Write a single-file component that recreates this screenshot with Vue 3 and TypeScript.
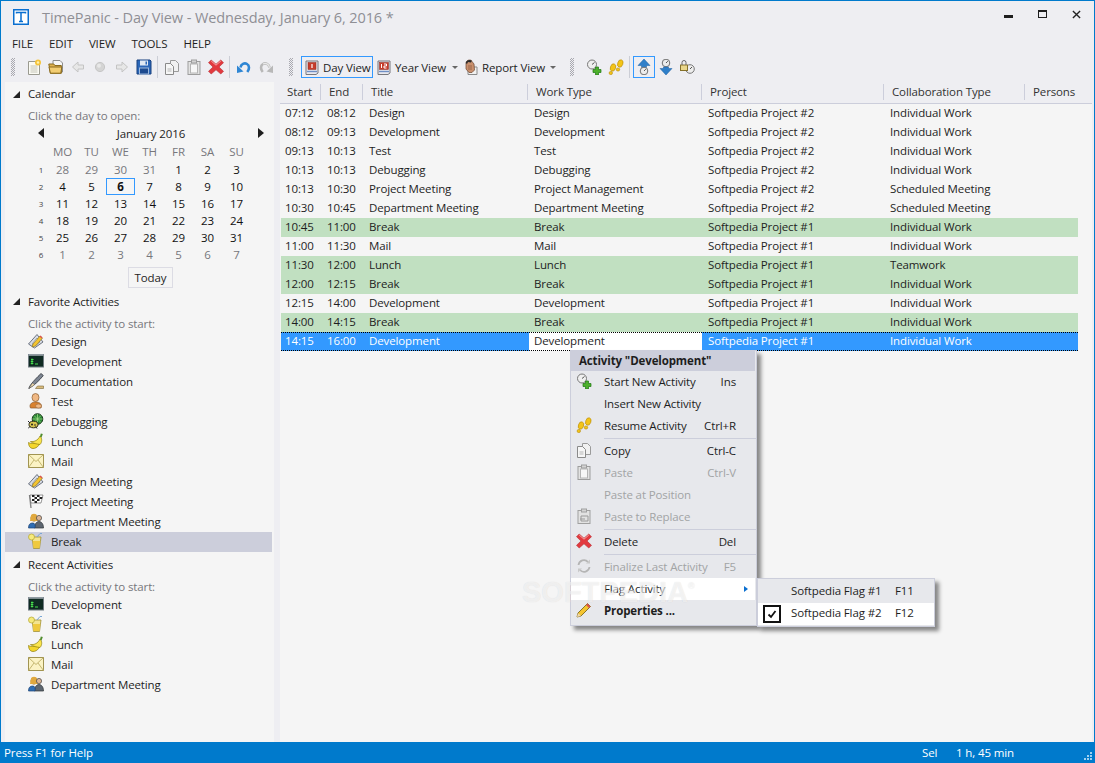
<script setup lang="ts">
const icons: Record<string, string> = {
  logo: '<rect x="0.75" y="0.75" width="14.500" height="14.500" fill="#fff" stroke="#0a6fd0" stroke-width="1.500"/><path d="M3.500 4.500V3.500h9v1M8 3.500v9M6 12.500h4" fill="none" stroke="#0a6fd0" stroke-width="1.500"/>',
  newdoc: '<path d="M2.500 2.500h8l3 3v10h-11z" fill="#fbfbf4" stroke="#9a9a90"/><path d="M4.500 7h7M4.500 9h7M4.500 11h7M4.500 13h7" stroke="#c4c4b8"/><circle cx="12" cy="3.500" r="3" fill="#f5c43a"/><circle cx="12" cy="3.500" r="1.200" fill="#fff3b0"/>',
  open: '<path d="M5 1.500h7l2.500 2.500v9H5z" fill="#f6f6f6" stroke="#8d8d8d"/><path d="M.8 5h5l1 1.500h6.500v7.800H2.400z" fill="#e0b24e" stroke="#8a6a1e"/><path d="M1 8h12.800l-1 6.200H2.400z" fill="#f2cd72" stroke="#8a6a1e"/>',
  back: '<path d="M8 3 2.500 8 8 13v-3h5.500V6H8z" fill="#e7e7e7" stroke="#c4c4c4"/>',
  dot: '<circle cx="8" cy="8" r="4.600" fill="#d4d4d4" stroke="#c6c6c6"/><circle cx="7" cy="6.800" r="2" fill="#e8e8e8"/>',
  fwd: '<path d="M8 3l5.500 5L8 13v-3H2.500V6H8z" fill="#e7e7e7" stroke="#c4c4c4"/>',
  save: '<path d="M1 1h13l1 1v13H1z" fill="#2a66b8" stroke="#18417f"/><rect x="4" y="1.500" width="8" height="5" fill="#dfe8f3"/><rect x="9.500" y="2.500" width="1.500" height="3" fill="#2a66b8"/><rect x="3.500" y="9" width="9" height="6" fill="#1c4a8f" stroke="#9cb8dc"/>',
  copy: '<path d="M6.500 1.500h5l3 3v8h-8z" fill="#f1f1f1" stroke="#9b9b9b"/><path d="M1.500 4.500h5l3 3v8h-8z" fill="#f6f6f6" stroke="#8a8a8a"/><path d="M3.500 10h4M3.500 12h4" stroke="#b6b6b6"/>',
  paste: '<rect x="2" y="2.500" width="12" height="13" fill="#e2e2e2" stroke="#9d9d9d"/><rect x="4.500" y="5" width="7" height="9" fill="#f7f7f7" stroke="#b5b5b5"/><rect x="5.500" y="1" width="5" height="3" fill="#d4d4d4" stroke="#9d9d9d"/>',
  del: '<path d="M3.200 1 8 5.200 12.800 1 15.500 3.700 11 8l4.500 4.300-2.700 2.700L8 10.800 3.200 15 .5 12.300 5 8 .5 3.700z" fill="#e2393f" stroke="#b72d33" stroke-width=".6"/><path d="M3.200 2 8 6.200 12.800 2" fill="none" stroke="#f7a3a3"/>',
  undo: '<path d="M4.500 8.500C5 5 8.500 3.500 11 5c2.500 1.500 2.700 5 .3 8" fill="none" stroke="#2f86d4" stroke-width="2.600"/><path d="M1 6.500l6.500 6-6.500 1.500z" fill="#2f86d4"/>',
  redo: '<path d="M11.500 8.500C11 5 7.500 3.500 5 5c-2.500 1.500-2.700 5-.3 8" fill="none" stroke="#b8b8b8" stroke-width="2.600"/><path d="M4.500 8.500C5 5 8.500 3.500 11 5" transform="matrix(-1 0 0 1 16 0)" fill="none" stroke="#e8e8e8" stroke-width="1.200"/><path d="M15 6.500l-6.500 6 6.500 1.500z" fill="#b8b8b8"/>',
  day: '<path d="M2 2h12v12l-2 1.500H2z" fill="#e9e9ee" stroke="#77777c"/><rect x="4" y="3.500" width="8" height="7" fill="#c63d2b" stroke="#8d2a1e" stroke-width=".5"/><path d="M8 5v4" stroke="#fff" stroke-width="1.200"/><path d="M3 12.500h10" stroke="#6f8fc5" stroke-width="1.400"/>',
  year: '<path d="M2 2h12v12l-2 1.500H2z" fill="#e9e9ee" stroke="#77777c"/><rect x="3.500" y="3.500" width="9" height="7" fill="#c63d2b" stroke="#8d2a1e" stroke-width=".5"/><path d="M5.500 5v4M8 5h2.500v2H8v2h2.500" stroke="#fff" fill="none"/><path d="M3 12.500h10" stroke="#6f8fc5" stroke-width="1.400"/>',
  report: '<path d="M5 8h9v7.500H5z" fill="#f2f2f2" stroke="#8a8a8a"/><path d="M3 4c0-2 2-3 3.500-3S9 1.500 9 2.500l2 2.500 .5 6-2.500 2.500H6L3 10z" fill="#c9906e" stroke="#6d4631" stroke-width=".7"/><path d="M2.800 4c.5-3 4-3.800 6-2.300L8 3.500 5 3 4 5z" fill="#2a2a2a"/><path d="M6 6v5M8 6v5" stroke="#87583e" stroke-width=".7"/>',
  start: '<circle cx="6" cy="5.500" r="4.500" fill="#efefef" stroke="#777"/><path d="M6 5.500 8.500 3.500" stroke="#555"/><path d="M9.500 8h3v2.500H15v3h-2.500V16h-3v-2.500H7v-3h2.500z" fill="#4db02c" stroke="#1c7612" stroke-width=".7"/>',
  resume: '<ellipse cx="5" cy="8.500" rx="2.600" ry="3.800" transform="rotate(18 5 8.500)" fill="#f3c418" stroke="#b98a00" stroke-width=".6"/><ellipse cx="2.800" cy="14" rx="1.700" ry="1.600" fill="#f3c418" stroke="#b98a00" stroke-width=".6"/><ellipse cx="12.300" cy="4.500" rx="2.600" ry="3.800" transform="rotate(18 12.300 4.500)" fill="#f3c418" stroke="#b98a00" stroke-width=".6"/><ellipse cx="10" cy="10.500" rx="1.700" ry="1.600" fill="#f3c418" stroke="#b98a00" stroke-width=".6"/>',
  up: '<path d="M8 0 14 6.500h-3.500v2h-5v-2H2z" fill="#2f7fc9" stroke="#1d5f9e" stroke-width=".5"/><circle cx="8" cy="12" r="3.800" fill="#ececec" stroke="#707070"/><path d="M8 12l1.800-1.800" stroke="#555"/>',
  down: '<circle cx="8" cy="4" r="3.800" fill="#ececec" stroke="#707070"/><path d="M8 4l1.800-1.800" stroke="#555"/><path d="M8 16 14 9.500h-3.500v-1.500h-5v1.500H2z" fill="#2f7fc9" stroke="#1d5f9e" stroke-width=".5"/>',
  lock: '<circle cx="11" cy="10" r="4.300" fill="#ededed" stroke="#777"/><path d="M11 10l2-2" stroke="#555"/><rect x="1.500" y="6" width="7" height="5.500" fill="#e9d68a" stroke="#85712a"/><path d="M3 6V3.500a2 2 0 0 1 4 0V6" fill="none" stroke="#666"/>',
  design: '<path d="M.5 11 9 1.500l6 7.500-8.500 6z" fill="#d9dde5" stroke="#6b7280"/><path d="M4 11 9 5l3 4-5 4z" fill="#f6f6f6" stroke="#9aa0aa"/><path d="M4 14l1-3 7-8 2.500 2-7 8z" fill="#f4c430" stroke="#7f6a14" stroke-width=".6"/><path d="M11.500 3.500 12.500 2.500l2 2-1 1z" fill="#d9534f"/>',
  dev: '<rect x=".5" y="1.500" width="15" height="12.500" fill="#0f2a22" stroke="#6f7a80"/><path d="M.5 2h15" stroke="#9aa4ab" stroke-width="1.600"/><path d="M3 6.500h2.500M2.800 8.500h2.500M2.800 10.500h2.500M4 5.500v6M7 11h3" stroke="#49e04f"/>',
  doc: '<path d="M.8 15.500c1-3 3-6 12.200-15l2.300 2C11 8 6 12.500.8 15.500z" fill="#7e8692" stroke="#2f333a" stroke-width=".8"/><path d="M1 15.300 4.500 10l2.200 1.700z" fill="#f1d9a8" stroke="#555" stroke-width=".4"/><path d="M7.500 15.500h8v-2.500H9.500z" fill="#d9bb7d" stroke="#7b6635" stroke-width=".6"/>',
  test: '<ellipse cx="7.500" cy="4.500" rx="3.500" ry="4" fill="#f0b883" stroke="#8a5a2e" stroke-width=".7"/><path d="M2.500 15c-1.500-3 .5-6 5-6s7 2.500 5.500 6z" fill="#d9812e" stroke="#8a5a2e" stroke-width=".7"/><ellipse cx="10.500" cy="13" rx="3" ry="2" fill="#f0b883" stroke="#8a5a2e" stroke-width=".5"/>',
  bug: '<circle cx="9.500" cy="6" r="5.300" fill="#2d8a36" stroke="#1e3b1f"/><path d="M9.500 1v10M4.500 6h10M6 2.500l7 7M13 2.500l-7 7" stroke="#a7e08a" stroke-width=".7"/><ellipse cx="5.500" cy="11.500" rx="4.500" ry="3.300" fill="#d9c650" stroke="#2b2b17"/><circle cx="4" cy="11.500" r="1" fill="#222"/><circle cx="7" cy="12" r=".8" fill="#222"/><path d="M0 8l2 2M0 15.500l2-2M9 15.500l-1.500-2" stroke="#222"/>',
  lunch: '<path d="M.5 9.500c3 1.800 8 .8 11.500-3.500.8 5-2.500 9.500-7 9.500-3 0-4.500-3-4.500-6z" fill="#f4d62a" stroke="#8d7d0d" stroke-width=".7"/><path d="M2.500 8.500c3.500.5 7.500-1 9.500-5.500 2.500 2.500 2 6.500 0 8.500-3-.5-7-1-9.500-3z" fill="#fbe54c" stroke="#8d7d0d" stroke-width=".7"/><path d="M12 3.500l.8-3 2 .5-1.300 3.500z" fill="#4f8c2d"/>',
  mail: '<rect x=".5" y="1.500" width="15" height="13" fill="#fbf3c4" stroke="#a19452"/><path d="M.5 1.500 8 8.500l7.500-7M.5 14.500 6 7M15.500 14.500 10 7" fill="none" stroke="#c3b670"/>',
  flag: '<path d="M3 15 1.500 2" stroke="#888" stroke-width="1.400"/><path d="M2 2h13l-2 8H3z" fill="#fff" stroke="#555" stroke-width=".6"/><path d="M4 2h2.500v2H4zM9 2h2.500v2H9zM6.500 4H9v2H6.500zM11.500 4H14.500l-.5 2h-2.500zM4 6h2.500v2H4zM9 6h2.500v2H9zM6.500 8H9v2H6.500z" fill="#222"/>',
  dept: '<circle cx="6" cy="5" r="3.200" fill="#f1c16e" stroke="#9a6a1c" stroke-width=".7"/><path d="M3 3C3 0 9 0 9 3l1 5H2z" fill="#e0a83e"/><circle cx="11" cy="5" r="2.600" fill="#dcb596" stroke="#444" stroke-width=".7"/><path d="M6.500 15c0-4 2-6.500 4.500-6.500s4.500 2.500 4.500 6.500z" fill="#5d6670" stroke="#2f3338" stroke-width=".7"/><path d="M.5 15c0-3.500 1.500-5 4-5s3 2 2.500 5z" fill="#2f6db3" stroke="#1c4373" stroke-width=".7"/>',
  drink: '<path d="M4 4h9l-1.500 11.500h-6z" fill="#f4e48f" stroke="#a08f32" stroke-width=".8"/><path d="M4.800 8h7.500L11.500 15h-6z" fill="#efc93d"/><circle cx="3.500" cy="4" r="3" fill="#f6ea7d" stroke="#b3a52e" stroke-width=".7"/><path d="M9 4l3-3.500h2" fill="none" stroke="#7aa7d6"/>',
  pdis: '<rect x="2" y="2.500" width="12" height="13" fill="#e2e2e2" stroke="#a0a0a0"/><rect x="5.500" y="1" width="5" height="3" fill="#d4d4d4" stroke="#a0a0a0"/><path d="M5 8h7v5H5zM9 11H4" fill="none" stroke="#9a9a9a"/>',
  fin: '<path d="M2.500 7A5.500 5.500 0 0 1 12 4M13.500 9A5.500 5.500 0 0 1 4 12" fill="none" stroke="#b5b5b5" stroke-width="1.800"/><path d="M10 5.500h4v-4zM6 10.500H2v4z" fill="#c8c8c8"/>',
  pencil: '<path d="M1 15l1-4L11.500 1.500l3 3L5 14z" fill="#f4c430" stroke="#6e5c10" stroke-width=".8"/><path d="M11.500 1.500l3 3-1.500 1.500-3-3z" fill="#d9534f"/><path d="M1 15l1-4 3 3z" fill="#f2d9ac"/>'
}

const menus = ['FILE', 'EDIT', 'VIEW', 'TOOLS', 'HELP']
const months = [
  ['1', 28, 29, 30, 31, 1, 2, 3],
  ['2', 4, 5, 6, 7, 8, 9, 10],
  ['3', 11, 12, 13, 14, 15, 16, 17],
  ['4', 18, 19, 20, 21, 22, 23, 24],
  ['5', 25, 26, 27, 28, 29, 30, 31],
  ['6', 1, 2, 3, 4, 5, 6, 7]
]
const isOther = (w: number, i: number) => (w === 0 && i < 4) || w === 5
const dayNames = ['MO', 'TU', 'WE', 'TH', 'FR', 'SA', 'SU']

const favorites = [
  ['design', 'Design'], ['dev', 'Development'], ['doc', 'Documentation'], ['test', 'Test'],
  ['bug', 'Debugging'], ['lunch', 'Lunch'], ['mail', 'Mail'], ['design', 'Design Meeting'],
  ['flag', 'Project Meeting'], ['dept', 'Department Meeting'], ['drink', 'Break']
]
const recent = [['dev', 'Development'], ['drink', 'Break'], ['lunch', 'Lunch'], ['mail', 'Mail'], ['dept', 'Department Meeting']]

const P2 = 'Softpedia Project #2'
const P1 = 'Softpedia Project #1'
const IW = 'Individual Work'
const rows = [
  ['07:12', '08:12', 'Design', 'Design', P2, IW, ''],
  ['08:12', '09:13', 'Development', 'Development', P2, IW, ''],
  ['09:13', '10:13', 'Test', 'Test', P2, IW, ''],
  ['10:13', '10:13', 'Debugging', 'Debugging', P2, IW, ''],
  ['10:13', '10:30', 'Project Meeting', 'Project Management', P2, 'Scheduled Meeting', ''],
  ['10:30', '10:45', 'Department Meeting', 'Department Meeting', P2, 'Scheduled Meeting', ''],
  ['10:45', '11:00', 'Break', 'Break', P1, IW, 'g'],
  ['11:00', '11:30', 'Mail', 'Mail', P1, IW, ''],
  ['11:30', '12:00', 'Lunch', 'Lunch', P1, 'Teamwork', 'g'],
  ['12:00', '12:15', 'Break', 'Break', P1, IW, 'g'],
  ['12:15', '14:00', 'Development', 'Development', P1, IW, ''],
  ['14:00', '14:15', 'Break', 'Break', P1, IW, 'g'],
  ['14:15', '16:00', 'Development', 'Development', P1, IW, 's']
]
const headers = ['Start', 'End', 'Title', 'Work Type', 'Project', 'Collaboration Type', 'Persons']

type Mi = { k: string; icon?: string; label?: string; key?: string; off?: boolean; hot?: boolean; bold?: boolean; sep?: boolean }
const menuItems: Mi[] = [
  { k: 'a', icon: 'start', label: 'Start New Activity', key: 'Ins' },
  { k: 'b', label: 'Insert New Activity' },
  { k: 'c', icon: 'resume', label: 'Resume Activity', key: 'Ctrl+R' },
  { k: 's1', sep: true },
  { k: 'd', icon: 'copy', label: 'Copy', key: 'Ctrl-C' },
  { k: 'e', icon: 'paste', label: 'Paste', key: 'Ctrl-V', off: true },
  { k: 'f', label: 'Paste at Position', off: true },
  { k: 'g', icon: 'pdis', label: 'Paste to Replace', off: true },
  { k: 's2', sep: true },
  { k: 'h', icon: 'del', label: 'Delete', key: 'Del' },
  { k: 's3', sep: true },
  { k: 'i', icon: 'fin', label: 'Finalize Last Activity', key: 'F5', off: true },
  { k: 'j', label: 'Flag Activity', hot: true },
  { k: 'l', icon: 'pencil', label: 'Properties ...', bold: true }
]
</script>

<template>
  <div class="win">
    <header class="title">
      <svg class="logo" viewBox="0 0 16 16" v-html="icons.logo"></svg>
      <span class="ttext">TimePanic - Day View - Wednesday, January 6, 2016 *</span>
      <div class="wbtns">
        <span class="wmin"></span>
        <span class="wmax"></span>
        <svg class="wclose" viewBox="0 0 10 10"><path d="M1 1l8 8M9 1l-8 8" stroke="#222" stroke-width="1.500"/></svg>
      </div>
    </header>

    <nav class="menubar">
      <span v-for="m in menus" :key="m" class="mitem">{{ m }}</span>
    </nav>

    <div class="toolbar">
      <span class="grip first"></span>
      <span v-for="n in ['newdoc','open','back','dot','fwd','save']" :key="n" class="tb"><svg viewBox="0 0 16 16" v-html="icons[n]"></svg></span>
      <span class="tsep"></span>
      <span v-for="n in ['copy','paste','del']" :key="n" class="tb"><svg viewBox="0 0 16 16" v-html="icons[n]"></svg></span>
      <span class="tsep"></span>
      <span v-for="n in ['undo','redo']" :key="n" class="tb"><svg viewBox="0 0 16 16" v-html="icons[n]"></svg></span>
      <span class="grip g2"></span>
      <span class="daybtn"><svg viewBox="0 0 16 16" v-html="icons.day"></svg><span>Day View</span></span>
      <span class="tview yv"><svg viewBox="0 0 16 16" v-html="icons.year"></svg><span class="vt vt1">Year View</span><i class="caret"></i></span>
      <span class="tview rv"><svg viewBox="0 0 16 16" v-html="icons.report"></svg><span class="vt vt2">Report View</span><i class="caret"></i></span>
      <span class="grip g3"></span>
      <span v-for="n in ['start','resume']" :key="n" class="tb"><svg viewBox="0 0 16 16" v-html="icons[n]"></svg></span>
      <span class="tsep s3"></span>
      <span class="tb act"><svg viewBox="0 0 16 16" v-html="icons.up"></svg></span>
      <span class="tb nar"><svg viewBox="0 0 16 16" v-html="icons.down"></svg></span>
      <span class="tb nar"><svg viewBox="0 0 16 16" v-html="icons.lock"></svg></span>
    </div>

    <div class="body">
      <aside class="side">
        <div class="sech"><i class="tri"></i>Calendar</div>
        <div class="hint">Click the day to open:</div>
        <div class="calh"><i class="al"></i><span>January 2016</span><i class="ar"></i></div>
        <div class="cal heads">
          <span></span><span v-for="d in dayNames" :key="d">{{ d }}</span>
        </div>
        <div v-for="(w, wi) in months" :key="wi" class="cal">
          <span class="wk">{{ w[0] }}</span>
          <span
            v-for="(d, i) in w.slice(1)"
            :key="i"
            :class="{ other: isOther(wi, i), today: wi === 1 && i === 2 }"
          >{{ d }}</span>
        </div>
        <div class="todayrow"><span class="todaybtn">Today</span></div>

        <div class="sech"><i class="tri"></i>Favorite Activities</div>
        <div class="hint h2">Click the activity to start:</div>
        <div v-for="(a, i) in favorites" :key="i" class="act-row" :class="{ sel: a[1] === 'Break' }">
          <svg viewBox="0 0 16 16" v-html="icons[a[0]]"></svg><span>{{ a[1] }}</span>
        </div>

        <div class="sech"><i class="tri"></i>Recent Activities</div>
        <div class="hint h2">Click the activity to start:</div>
        <div v-for="(a, i) in recent" :key="i" class="act-row">
          <svg viewBox="0 0 16 16" v-html="icons[a[0]]"></svg><span>{{ a[1] }}</span>
        </div>
      </aside>

      <main class="grid">
        <div class="ghead">
          <span v-for="(h, i) in headers" :key="h" class="hc" :class="'c' + i">{{ h }}</span>
        </div>
        <div v-for="(r, ri) in rows" :key="ri" class="row" :class="r[6]">
          <span v-for="ci in 6" :key="ci" class="cell" :class="['c' + (ci - 1), { edit: r[6] === 's' && ci === 4 }]">{{ r[ci - 1] }}</span>
          <span class="cell c6"></span>
        </div>
      </main>
    </div>

    <footer class="status">
      <span class="help">Press F1 for Help</span>
      <span class="sel1">Sel</span>
      <span class="sel2">1 h, 45 min</span>
      <svg class="sgrip" viewBox="0 0 12 12"><g fill="#9fd0f0"><rect x="9" y="9" width="2" height="2"/><rect x="6" y="9" width="2" height="2"/><rect x="3" y="9" width="2" height="2"/><rect x="9" y="6" width="2" height="2"/><rect x="6" y="6" width="2" height="2"/><rect x="9" y="3" width="2" height="2"/></g></svg>
    </footer>

    <div class="ctx">
      <div class="ctitle">Activity "Development"</div>
      <template v-for="m in menuItems" :key="m.k">
        <div v-if="m.sep" class="csep"></div>
        <div v-else class="citem" :class="{ off: m.off, hot: m.hot, bold: m.bold }">
          <span class="cico"><svg v-if="m.icon" viewBox="0 0 16 16" v-html="icons[m.icon]"></svg></span>
          <span class="clabel">{{ m.label }}</span>
          <span v-if="m.key" class="ckey">{{ m.key }}</span>
          <i v-if="m.hot" class="carr"></i>
        </div>
      </template>
    </div>

    <div class="sub">
      <div class="sitem"><span class="sbox"></span><span class="slabel">Softpedia Flag #1</span><span class="skey">F11</span></div>
      <div class="sitem on">
        <span class="sbox chk"><svg viewBox="0 0 10 10"><path d="M1.500 5.500 4 8l4.500-6" fill="none" stroke="#111" stroke-width="1.800"/></svg></span>
        <span class="slabel">Softpedia Flag #2</span><span class="skey">F12</span>
      </div>
    </div>

    <div class="wm" aria-hidden="true">SOFTPEDIA<sup>®</sup></div>
  </div>
</template>

<style>
html, body { margin: 0; padding: 0; }
</style>

<style scoped>
.win {
  position: relative;
  box-sizing: border-box;
  width: 1095px;
  height: 763px;
  overflow: hidden;
  display: flex;
  flex-direction: column;
  background: #eeeef2;
  border: 1px solid #007acc;
  border-bottom: 0;
  font-family: "Open Sans", "Noto Sans", sans-serif;
  font-size: 11.5px;
  letter-spacing: -0.12px;
  color: #1e1e1e;
}
svg { display: block; width: 16px; height: 16px; }

.title { height: 32px; display: flex; align-items: center; padding-left: 12px; flex: none; }
.logo { width: 16px; height: 16px; }
.ttext { margin-left: 13px; font-size: 14.500px; letter-spacing: -0.1px; color: #8f8f95; }
.wbtns { margin-left: auto; position: relative; height: 32px; width: 100px; }
.wmin { position: absolute; left: 10px; top: 14px; width: 9px; height: 3px; background: #1e1e1e; }
.wmax { position: absolute; left: 44px; top: 9px; width: 7px; height: 5px; border: 1px solid #1e1e1e; border-top-width: 2px; }
.wclose { position: absolute; left: 78px; top: 9px; width: 9px; height: 9px; }

.menubar { height: 20px; display: flex; align-items: center; padding-left: 11px; flex: none; font-size: 11.5px; }
.mitem { margin-right: 16px; }

.toolbar { height: 28px; display: flex; align-items: center; flex: none; }
.grip {
  width: 4px; height: 18px; flex: none;
  background: repeating-conic-gradient(#a9a9b0 0 25%, transparent 0 50%) 0 0 / 2px 2px;
}
.first { margin-left: 10px; margin-right: 8px; }
.g2 { margin-left: 12px; }
.g3 { margin-left: 7px; margin-right: 9px; }
.tb { width: 22px; height: 22px; display: flex; align-items: center; justify-content: center; flex: none; box-sizing: border-box; }
.tb.nar { width: 21px; }
.tb.act { width: 22px; border: 1px solid #3399ff; }
.tsep { width: 1px; height: 22px; background: #ccced6; margin: 0 3px 0 2px; flex: none; }
.daybtn {
  margin-left: 8px; width: 72px; height: 22px; box-sizing: border-box; border: 1px solid #3399ff;
  display: flex; align-items: center; padding-left: 2px; flex: none;
}
.daybtn span { margin-left: 3px; white-space: nowrap; }
.tview { display: flex; align-items: center; flex: none; }
.yv { margin-left: 3px; }
.rv { margin-left: -2px; }
.vt { margin-left: 3px; white-space: nowrap; }
.vt1 { width: 52px; }
.vt2 { width: 63px; margin-left: 3px; }
.caret { width: 0; height: 0; border: 3px solid transparent; border-top: 3px solid #666; border-bottom: 0; margin: 1px 7px 0 5px; }

.body { flex: 1; display: flex; min-height: 0; padding-left: 4px; padding-right: 2px; }
.side { width: 269px; background: #f5f5f5; flex: none; margin-top: 1px; }
.side > .sech:first-child { height: 23px; }
.sech { height: 24px; display: flex; align-items: center; padding-left: 23px; position: relative; color: #1e1e1e; }
.tri { position: absolute; left: 8px; top: 9px; width: 0; height: 0; border-left: 7px solid transparent; border-bottom: 7px solid #222; }
.hint { height: 20px; box-sizing: border-box; padding-top: 1px; line-height: 19px; padding-left: 23px; color: #77777c; }
.h2 { margin-bottom: -1px; }
.calh { height: 16px; width: 232px; margin-left: 29px; display: flex; align-items: center; justify-content: space-between; }
.al, .ar { width: 0; height: 0; border: 5px solid transparent; }
.al { border-right: 6px solid #1e1e1e; border-left: 0; margin-left: 4px; }
.ar { border-left: 6px solid #1e1e1e; border-right: 0; margin-right: 2px; }
.cal { display: grid; grid-template-columns: 14px repeat(7, 29px); margin-left: 29px; height: 17px; text-align: center; align-items: center; color: #111; }
.heads { height: 20px; color: #77777c; }
.wk { font-size: 8px; color: #444; }
.other { color: #77777c; }
.today { box-sizing: border-box; border: 1px solid #3399ff; height: 17px; line-height: 15px; font-weight: 700; }
.todayrow { display: flex; justify-content: center; margin: 4px 0 1px; width: 291px; }
.todaybtn { box-sizing: border-box; height: 21px; width: 45px; border: 1px solid #dcdce4; display: flex; align-items: center; justify-content: center; }
.act-row { height: 20px; box-sizing: border-box; padding-bottom: 2px; display: flex; align-items: center; padding-left: 23px; margin-right: 2px; }
.act-row span { margin-left: 7px; }
.sel { background: #cccedb; }

.grid { margin-left: 6px; flex: 1; background: #f5f5f5; }
.ghead { height: 23px; box-sizing: border-box; display: flex; align-items: center; background: #eeeef2; border-bottom: 1px solid #cccedb; padding: 0 0 1px 1px; }
.row { display: flex; height: 19px; align-items: center; width: 797px; margin-left: 1px; }
.hc { box-sizing: border-box; height: 16px; line-height: 16px; padding-left: 8px; border-right: 1px solid #cccedb; color: #333; white-space: nowrap; }
.cell { box-sizing: border-box; padding-left: 6px; height: 100%; line-height: 17px; white-space: nowrap; overflow: hidden; }
.c0 { width: 40px; }
.c1 { width: 42px; }
.c2 { width: 165px; }
.c3 { width: 174px; }
.c4 { width: 182px; }
.c5 { width: 141px; }
.c6 { width: 53px; border-right: 0; }
.cell.c0 { padding-left: 4px; }
.hc.c0 { padding-left: 6px; }
.g { background: #c1e0c1; }
.s { background: #3399ff; color: #fff; position: relative; }
.s::after { content: ""; position: absolute; inset: 0; border-top: 1px dotted #000; border-bottom: 1px dotted #000; pointer-events: none; }
.edit { background: #fff; color: #1e1e1e; margin-left: 1px; width: 173px; padding-left: 5px; }

.status { height: 21px; background: #007acc; color: #fff; display: flex; align-items: center; flex: none; position: relative; margin: 0 -1px; padding-left: 4px; }
.sel1 { position: absolute; left: 922px; }
.sel2 { position: absolute; left: 956px; }
.sgrip { position: absolute; right: 2px; bottom: 2px; width: 12px; height: 12px; }

.ctx {
  position: absolute; left: 569px; top: 349px; width: 187px; height: 276px; box-sizing: border-box;
  background: #e7e8ec; border: 1px solid #cccedb; box-shadow: 4px 4px 4px rgba(0,0,0,0.45); color: #1e1e1e;
}
.ctitle { height: 20px; line-height: 20px; background: #cccedb; font-weight: 700; padding-left: 8px; margin-right: 1px; }
.citem { height: 22px; box-sizing: border-box; padding-bottom: 2px; display: flex; align-items: center; margin-right: 1px; position: relative; }
.cico { width: 16px; height: 16px; margin-left: 5px; flex: none; }
.clabel { margin-left: 12px; white-space: nowrap; }
.ckey { margin-left: auto; margin-right: 19px; }
.off { color: #a2a4a5; }
.hot { background: #fff; }
.carr { position: absolute; right: 7px; top: 8px; width: 0; height: 0; border-left: 4px solid #0a6fd0; border-top: 3px solid transparent; border-bottom: 3px solid transparent; }
.bold { font-weight: 700; }
.csep { height: 3px; box-sizing: border-box; border-top: 1px solid #cccedb; margin: 1px 0 -1px 33px; }

.sub {
  position: absolute; left: 756px; top: 577px; width: 178px; height: 49px; box-sizing: border-box; padding-top: 2px;
  background: #e7e8ec; border: 1px solid #cccedb; box-shadow: 4px 4px 4px rgba(0,0,0,0.45); color: #1e1e1e;
}
.sitem { height: 22px; display: flex; align-items: center; }
.on { background: #fff; }
.sbox { width: 18px; height: 18px; margin-left: 5px; margin-right: 10px; flex: none; box-sizing: border-box; display: flex; align-items: center; justify-content: center; }
.chk { border: 2px solid #111; }
.chk svg { width: 10px; height: 10px; }
.slabel { width: 104px; white-space: nowrap; padding-bottom: 4px; }
.skey { padding-bottom: 4px; }

.wm { position: absolute; left: 521px; top: 575px; font-family: "Liberation Sans", sans-serif; font-weight: 700; font-size: 29px; letter-spacing: 0; color: rgba(255,255,255,0.6); text-shadow: 0 0 1px rgba(0,0,0,0.12); white-space: nowrap; pointer-events: none; }
.wm sup { font-size: 9px; vertical-align: top; line-height: 20px; }
</style>
